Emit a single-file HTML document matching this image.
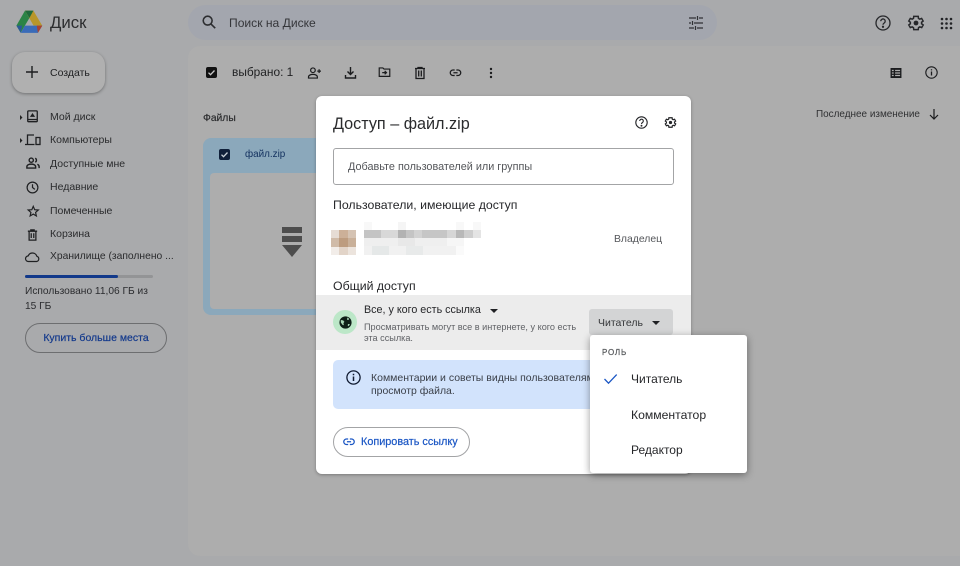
<!DOCTYPE html>
<html lang="ru"><head><meta charset="utf-8"><title>Диск</title>
<style>
html,body{margin:0;padding:0}
body{width:960px;height:566px;overflow:hidden;position:relative;background:#a9aaac;font-family:"Liberation Sans",sans-serif;color:#202124}
.t{position:absolute;white-space:nowrap;line-height:16px;height:16px}
.a{position:absolute}
svg.a{overflow:visible}
.n{font-size:10.5px;color:#2a2b2d;left:50px}
.p{position:absolute;width:8.4px;height:8.4px}
</style></head><body>
<!-- main panel -->
<div class="a" style="left:188px;top:46px;width:772px;height:510px;background:#adadad;border-radius:12px 0 0 12px"></div>
<!-- search -->
<div class="a" style="left:188px;top:5px;width:529px;height:35px;background:#a3a6ae;border-radius:18px"></div>
<!-- logo -->
<svg class="a" style="left:16px;top:10px" width="27" height="24" viewBox="0 0 27 24">
<path d="M9 .6 .4 15.6l4.3 7.2L13.4 8z" fill="#2b8446"/>
<path d="M9 .6h8.4l8.8 15H17.6z" fill="#b8962a"/>
<path d="M9 .6h8.4L13.4 8z" fill="#1f6a3c"/>
<path d="M26.3 15.6H8.9l-4.2 7.3h17.2z" fill="#3a6bb8"/>
<path d="M26.3 15.6h-5.600l1.200 7.300z" fill="#a84232"/>
<path d="M4.700 22.900.4 15.600h5.800z" fill="#2b5a96"/>
</svg>
<div class="t" style="left:50px;top:15px;font-size:16.800px;color:#2c2d2f">Диск</div>
<!-- search icon -->
<svg class="a" style="left:201px;top:14px" width="16" height="16" viewBox="0 0 18 18" fill="none" stroke="#2c2d30" stroke-width="1.800"><circle cx="7.500" cy="7.500" r="5"/><path d="M11 11l5 5"/></svg>
<div class="t" style="left:229px;top:15px;font-size:12.100px;color:#35363a">Поиск на Диске</div>
<svg class="a" style="left:688px;top:15px" width="16" height="16" viewBox="0 0 16 16" fill="none" stroke="#303134" stroke-width="1.200"><path d="M1 3h7M11 3h4M1 8h2M6 8h9M1 13h5M9 13h6M9.500 1v4M4.500 6v4M7.500 11v4"/></svg>
<!-- top right icons -->
<svg class="a" style="left:875px;top:15px" width="16" height="16" viewBox="0 0 16 16" fill="none" stroke="#26272a" stroke-width="1.300"><circle cx="8" cy="8" r="7"/><path d="M5.800 6.200a2.200 2.200 0 1 1 3.400 1.800c-.8.500-1.200 1-1.200 1.800"/><circle cx="8" cy="11.800" r=".5" fill="#26272a"/></svg>
<svg class="a" style="left:906.500px;top:14px" width="18" height="18" viewBox="0 0 24 24" fill="none" stroke="#26272a" stroke-width="2"><path d="M19.400 13a7.500 7.500 0 0 0 0-2l2.100-1.600-2-3.500-2.500 1a7.300 7.300 0 0 0-1.700-1L15 3.200H9l-.4 2.700a7.300 7.300 0 0 0-1.700 1l-2.500-1-2 3.500L4.500 11a7.500 7.500 0 0 0 0 2l-2.100 1.600 2 3.500 2.500-1a7.300 7.300 0 0 0 1.700 1l.4 2.700h6l.4-2.700a7.300 7.300 0 0 0 1.700-1l2.500 1 2-3.500z"/><circle cx="12" cy="12" r="3.200" fill="#26272a" stroke="none"/></svg>
<svg class="a" style="left:940px;top:17px" width="13" height="13" viewBox="0 0 13 13" fill="#222326"><circle cx="2" cy="2" r="1.300"/><circle cx="6.500" cy="2" r="1.300"/><circle cx="11" cy="2" r="1.300"/><circle cx="2" cy="6.500" r="1.300"/><circle cx="6.500" cy="6.500" r="1.300"/><circle cx="11" cy="6.500" r="1.300"/><circle cx="2" cy="11" r="1.300"/><circle cx="6.500" cy="11" r="1.300"/><circle cx="11" cy="11" r="1.300"/></svg>
<!-- create -->
<div class="a" style="left:12px;top:52px;width:93px;height:41px;background:#b0b0b0;border-radius:13px;box-shadow:0 1px 3px rgba(0,0,0,.35)"></div>
<svg class="a" style="left:25px;top:65px" width="14" height="14" viewBox="0 0 14 14" stroke="#1d1e20" stroke-width="1.400"><path d="M7 1v12M1 7h12"/></svg>
<div class="t" style="left:50px;top:64.500px;font-size:10.500px;color:#1f2022">Создать</div>
<!-- nav -->
<svg class="a" style="left:19px;top:114px" width="4" height="32" fill="#222"><path d="M1 1l2.500 2.500L1 6zM1 24l2.500 2.500L1 29z"/></svg>
<svg class="a" style="left:25.500px;top:110px" width="13" height="13" viewBox="0 0 15 15" fill="none" stroke="#1f2022" stroke-width="1.500"><rect x="2" y="1" width="11" height="12.500" rx="1"/><path d="M2 11h11"/><path d="M7.500 3.500 10.500 8h-6z" fill="#1f2022" stroke="none"/></svg>
<svg class="a" style="left:25px;top:133px" width="16" height="14" viewBox="0 0 16 14" fill="none" stroke="#1f2022" stroke-width="1.300"><path d="M9 2H2.500v9M0 11.500h9.500"/><rect x="11" y="4.500" width="4" height="7"/></svg>
<svg class="a" style="left:25.500px;top:157px" width="14" height="12.500" viewBox="0 0 16 14" fill="none" stroke="#1f2022" stroke-width="1.600"><circle cx="6" cy="3.500" r="2.400"/><path d="M1 12.500v-1.500c0-2 2.500-3 5-3s5 1 5 3v1.500z"/><path d="M10.500 1.300a2.400 2.400 0 0 1 0 4.400M13 8.200c1.200.6 2 1.500 2 2.800v1.500"/></svg>
<svg class="a" style="left:26px;top:181px" width="13" height="13" viewBox="0 0 14 14" fill="none" stroke="#1f2022" stroke-width="1.300"><circle cx="7" cy="7" r="5.800"/><path d="M7 3.500V7l2.500 2"/></svg>
<svg class="a" style="left:26.500px;top:205px" width="12.500" height="12.500" viewBox="0 0 14 14" fill="none" stroke="#1f2022" stroke-width="1.300"><path d="M7 1.500l1.600 3.800 4.100.3-3.100 2.700.9 4-3.500-2.100-3.500 2.100.9-4L1.300 5.600l4.100-.3z"/></svg>
<svg class="a" style="left:27px;top:228.500px" width="11" height="12" viewBox="0 0 13 14" fill="none" stroke="#1f2022" stroke-width="1.500"><path d="M1 2.500h11M2.500 2.500v10.500h8V2.500M4.500 2.500V1h4v1.500M5 5v5.500M8 5v5.500"/></svg>
<svg class="a" style="left:25px;top:251px" width="15" height="12" viewBox="0 0 15 12" fill="none" stroke="#1f2022" stroke-width="1.200"><path d="M3.500 10.500a2.800 2.800 0 0 1-.3-5.600A4.600 4.600 0 0 1 7.500 2a4.600 4.600 0 0 1 4.400 3.300 2.700 2.700 0 0 1-.2 5.200z"/></svg>
<div class="t n" style="top:108.500px">Мой диск</div>
<div class="t n" style="top:132px">Компьютеры</div>
<div class="t n" style="top:155.500px">Доступные мне</div>
<div class="t n" style="top:179px">Недавние</div>
<div class="t n" style="top:202.500px">Помеченные</div>
<div class="t n" style="top:225.500px">Корзина</div>
<div class="t n" style="top:249px;font-size:10.300px">Хранилище (заполнено ...</div>
<div class="a" style="left:25px;top:275px;width:128px;height:3px;background:#939496;border-radius:2px"></div>
<div class="a" style="left:25px;top:275px;width:93px;height:3px;background:#12398a;border-radius:2px"></div>
<div class="t" style="left:25px;top:283.500px;font-size:10.200px;color:#2b2c2f">Использовано 11,06 ГБ из</div>
<div class="t" style="left:25px;top:298.500px;font-size:10.200px;color:#2b2c2f">15 ГБ</div>
<div class="a" style="left:25px;top:323px;width:140px;height:28px;border:1px solid #6d6e70;border-radius:15px"></div>
<div class="t" style="left:25px;top:330px;width:142px;text-align:center;font-size:10.500px;color:#143a8c;-webkit-text-stroke:.2px #143a8c">Купить больше места</div>
<!-- toolbar -->
<div class="a" style="left:206px;top:67px;width:11px;height:11px;background:#111;border-radius:2px"></div>
<svg class="a" style="left:206px;top:67px" width="11" height="11" fill="none" stroke="#c8c8c8" stroke-width="1.300"><path d="M2.500 5.700l2 2 4-4.200"/></svg>
<div class="t" style="left:232px;top:64px;font-size:11.900px;color:#1f2022">выбрано: 1</div>
<svg class="a" style="left:307px;top:67px" width="15" height="12" viewBox="0 0 15 13" fill="none" stroke="#1b1c1e" stroke-width="1.300"><circle cx="5.800" cy="3.500" r="2.500"/><path d="M1 12v-1.200c0-1.800 2.300-2.800 4.800-2.800s4.800 1 4.800 2.800V12zM10.500 4.500h4M12.500 2.500v4"/></svg>
<svg class="a" style="left:345px;top:67px" width="11" height="12" viewBox="0 0 11 12" fill="none" stroke="#1b1c1e" stroke-width="1.400"><path d="M5.500 0v7M2.500 4.500l3 3 3-3M.5 8v3h10V8"/></svg>
<svg class="a" style="left:378px;top:67px" width="13" height="10" viewBox="0 0 13 11" fill="none" stroke="#1b1c1e" stroke-width="1.300"><path d="M.7 1h4l1.300 1.300h6.300v8H.7zM4 6.200h4.500M6.700 4.300l2 1.900-2 1.900"/></svg>
<svg class="a" style="left:415px;top:67px" width="10" height="12" viewBox="0 0 10 12" fill="none" stroke="#1b1c1e" stroke-width="1.300"><path d="M0 1.500h10M1 1.500v10h8v-10M3 1.500V.5h4v1M3.700 3.500v6M6.300 3.500v6"/></svg>
<svg class="a" style="left:449px;top:69px" width="13" height="7.500" viewBox="0 0 13 9" fill="none" stroke="#1b1c1e" stroke-width="1.500"><path d="M5.500 1.200H3.500a3.300 3.300 0 0 0 0 6.600h2M7.500 1.200h2a3.300 3.300 0 0 1 0 6.600h-2M4 4.500h5"/></svg>
<svg class="a" style="left:489px;top:67px" width="4" height="12" fill="#1b1c1e"><circle cx="2" cy="2" r="1.200"/><circle cx="2" cy="6" r="1.200"/><circle cx="2" cy="10" r="1.200"/></svg>
<svg class="a" style="left:890px;top:67.500px" width="12" height="10" viewBox="0 0 12 11"><path fill-rule="evenodd" fill="#1b1c1e" d="M0 0h12v11H0zM1.500 2v1.500h2V2zm3.500 0v1.500h5.500V2zM1.500 4.800v1.400h2V4.800zm3.500 0v1.400h5.500V4.800zM1.500 7.500V9h2V7.500zm3.500 0V9h5.500V7.500z"/></svg>
<svg class="a" style="left:925px;top:66px" width="13" height="13" viewBox="0 0 13 13" fill="none" stroke="#1b1c1e" stroke-width="1.100"><circle cx="6.500" cy="6.500" r="5.700"/><path d="M6.500 5.500v4M6.500 3.200v1.200" stroke-width="1.300"/></svg>
<div class="t" style="left:203px;top:110.500px;font-size:10.300px;color:#28292b;-webkit-text-stroke:.15px #28292b">Файлы</div>
<div class="t" style="left:816px;top:107px;font-size:9.950px;color:#2f3032">Последнее изменение</div>
<svg class="a" style="left:929px;top:109px" width="10" height="11" fill="none" stroke="#1b1c1e" stroke-width="1.200"><path d="M5 0v10M1 6l4 4 4-4"/></svg>
<!-- file card -->
<div class="a" style="left:203px;top:138px;width:120px;height:177px;background:#8ba8bb;border-radius:8px 0 0 8px"></div>
<div class="a" style="left:210px;top:173px;width:110px;height:136px;background:#adadad;border-radius:4px"></div>
<div class="a" style="left:219px;top:149px;width:11px;height:11px;background:#10203a;border-radius:2px"></div>
<svg class="a" style="left:219px;top:149px" width="11" height="11" fill="none" stroke="#c8d0d8" stroke-width="1.300"><path d="M2.500 5.700l2 2 4-4.200"/></svg>
<div class="t" style="left:245px;top:147px;font-size:9.900px;color:#12305e">файл.zip</div>
<div class="a" style="left:282px;top:227px;width:20px;height:6px;background:#4d4d4d"></div>
<div class="a" style="left:282px;top:236px;width:20px;height:6px;background:#4d4d4d"></div>
<svg class="a" style="left:282px;top:245px" width="20" height="12"><path d="M0 0h20L10 12z" fill="#4d4d4d"/></svg>
<!-- dialog -->
<div class="a" style="left:316px;top:96px;width:375px;height:378px;background:#fff;border-radius:6px;box-shadow:0 1px 3px rgba(0,0,0,.3)"></div>
<div class="t" style="left:333px;top:115px;font-size:16.200px;line-height:18px;height:18px;color:#2a2b2d">Доступ – файл.zip</div>
<svg class="a" style="left:635px;top:115.500px" width="13" height="13" viewBox="0 0 13 13" fill="none" stroke="#222326" stroke-width="1.100"><circle cx="6.500" cy="6.500" r="5.700"/><path d="M4.700 5a1.800 1.800 0 1 1 2.800 1.500c-.7.400-1 .8-1 1.500"/><circle cx="6.500" cy="9.700" r=".4" fill="#222326"/></svg>
<svg class="a" style="left:664px;top:115.500px" width="13" height="13" viewBox="0 0 24 24" fill="none" stroke="#222326" stroke-width="2.200"><path d="M19.400 13a7.500 7.500 0 0 0 0-2l2.100-1.600-2-3.500-2.500 1a7.300 7.300 0 0 0-1.700-1L15 3.200H9l-.4 2.700a7.300 7.300 0 0 0-1.700 1l-2.500-1-2 3.500L4.500 11a7.500 7.500 0 0 0 0 2l-2.100 1.600 2 3.500 2.500-1a7.300 7.300 0 0 0 1.700 1l.4 2.700h6l.4-2.700a7.300 7.300 0 0 0 1.700-1l2.500 1 2-3.500z"/><circle cx="12" cy="12" r="3" fill="#222326" stroke="none"/></svg>
<div class="a" style="left:333px;top:148px;width:339px;height:35px;border:1px solid #a3a4a6;border-radius:3px"></div>
<div class="t" style="left:348px;top:158.500px;font-size:10.850px;color:#54565a">Добавьте пользователей или группы</div>
<div class="t" style="left:333px;top:197px;font-size:12.300px;color:#26272a">Пользователи, имеющие доступ</div>
<!-- avatar pixels -->
<div class="p" style="left:331px;top:230px;background:#e6dcd4"></div><div class="p" style="left:339.400px;top:230px;background:#ccb098"></div><div class="p" style="left:347.800px;top:230px;background:#d5c3b3"></div>
<div class="p" style="left:331px;top:238.400px;background:#d0bba8"></div><div class="p" style="left:339.400px;top:238.400px;background:#bd9c7f"></div><div class="p" style="left:347.800px;top:238.400px;background:#c9b099"></div>
<div class="p" style="left:331px;top:246.800px;background:#f2ede9"></div><div class="p" style="left:339.400px;top:246.800px;background:#e2d4c8"></div><div class="p" style="left:347.800px;top:246.800px;background:#ece4dd"></div>
<svg class="a" style="left:364px;top:222px" width="120" height="34" shape-rendering="crispEdges">
<rect x="0" y="0" width="8" height="8" fill="#f8f8f8"/><rect x="34" y="0" width="8" height="8" fill="#f5f5f5"/><rect x="92" y="0" width="8" height="8" fill="#f8f8f8"/><rect x="109" y="0" width="8" height="8" fill="#f8f8f8"/>
<rect x="0" y="8" width="17" height="8" fill="#c4c4c4"/><rect x="17" y="8" width="17" height="8" fill="#d8d8d8"/><rect x="34" y="8" width="8" height="8" fill="#b2b2b2"/><rect x="42" y="8" width="8" height="8" fill="#c4c4c4"/><rect x="50" y="8" width="8" height="8" fill="#d2d2d2"/><rect x="58" y="8" width="25" height="8" fill="#c6c6c6"/><rect x="83" y="8" width="9" height="8" fill="#d6d6d6"/><rect x="92" y="8" width="8" height="8" fill="#b8b8b8"/><rect x="100" y="8" width="9" height="8" fill="#cecece"/><rect x="109" y="8" width="8" height="8" fill="#e4e4e4"/>
<rect x="0" y="16" width="83" height="8" fill="#efefef"/><rect x="34" y="16" width="17" height="8" fill="#e8e8e8"/><rect x="83" y="16" width="17" height="8" fill="#f6f6f6"/>
<rect x="0" y="24" width="92" height="9" fill="#f1f1f1"/><rect x="8" y="24" width="17" height="9" fill="#e5e8e8"/><rect x="42" y="24" width="17" height="9" fill="#e8eaea"/><rect x="92" y="24" width="8" height="9" fill="#fafafa"/>
</svg>
<div class="t" style="left:614px;top:232px;font-size:10.400px;color:#54565a">Владелец</div>
<div class="t" style="left:333px;top:278px;font-size:12.300px;color:#26272a">Общий доступ</div>
<!-- access row -->
<div class="a" style="left:316px;top:295px;width:375px;height:55px;background:#ececec"></div>
<div class="a" style="left:333px;top:310px;width:24px;height:24px;background:#bce7c8;border-radius:50%"></div>
<svg class="a" style="left:338.500px;top:315.500px" width="13" height="13" viewBox="0 0 13 13"><circle cx="6.500" cy="6.500" r="6.100" fill="#0f1f18"/><path d="M1.800 4l2.400.4 1.200 1.500-1 1.200.5 2.200-1.500-.6-1.600-2.300zM8.300 1.500l1.900 1.200-.6 1.200-1.500 0zM9 8h1.900l-1.100 2.200-1.100-.7z" fill="#a9d5b6"/></svg>
<div class="t" style="left:364px;top:302px;font-size:10.750px;color:#26272a">Все, у кого есть ссылка</div>
<svg class="a" style="left:490px;top:309px" width="8" height="4"><path d="M0 0h8L4 4z" fill="#202124"/></svg>
<div class="t" style="left:364px;top:318.500px;font-size:9.150px;color:#606266">Просматривать могут все в интернете, у кого есть</div>
<div class="t" style="left:364px;top:330px;font-size:9.150px;color:#606266">эта ссылка.</div>
<div class="a" style="left:589px;top:309px;width:84px;height:26px;background:#d3d4d5;border-radius:3px"></div>
<div class="t" style="left:598px;top:314.500px;font-size:10.500px;color:#36373a">Читатель</div>
<svg class="a" style="left:651.500px;top:321px" width="8" height="4"><path d="M0 0h8L4 4z" fill="#202124"/></svg>
<!-- info -->
<div class="a" style="left:333px;top:360px;width:300px;height:49px;background:#d2e3fc;border-radius:5px"></div>
<svg class="a" style="left:346px;top:370px" width="15" height="15" viewBox="0 0 15 15" fill="none" stroke="#0f1a30" stroke-width="1.300"><circle cx="7.500" cy="7.500" r="6.600"/><path d="M7.500 6.500v4.500M7.500 3.800v1.400" stroke-width="1.500"/></svg>
<div class="t" style="left:371px;top:369.500px;width:219px;overflow:hidden;font-size:10.500px;color:#3a3f48">Комментарии и советы видны пользователям</div>
<div class="t" style="left:371px;top:384px;font-size:10.450px;color:#3a3f48">просмотр файла.</div>
<!-- copy link -->
<div class="a" style="left:333px;top:427px;width:135px;height:28px;border:1px solid #a3a4a6;border-radius:15px"></div>
<svg class="a" style="left:343px;top:438px" width="12" height="7.500" viewBox="0 0 12 9" fill="none" stroke="#1a56c4" stroke-width="1.500"><path d="M5 1.200H3a3.300 3.300 0 0 0 0 6.600h2M7 1.200h2a3.300 3.300 0 0 1 0 6.600H7M3.500 4.500h5"/></svg>
<div class="t" style="left:361px;top:433.500px;font-size:10.850px;color:#1a56c4;-webkit-text-stroke:.2px #1a56c4">Копировать ссылку</div>
<!-- menu -->
<div class="a" style="left:590px;top:335px;width:157px;height:138px;background:#fff;border-radius:3px;box-shadow:0 2px 8px rgba(0,0,0,.4)"></div>
<div class="t" style="left:602px;top:345px;font-size:8px;letter-spacing:.8px;color:#55575a;-webkit-text-stroke:.2px #55575a">РОЛЬ</div>
<svg class="a" style="left:604px;top:374px" width="13" height="10" fill="none" stroke="#1a56c4" stroke-width="1.300"><path d="M.5 5l4 4.200L12.700.6"/></svg>
<div class="t" style="left:631px;top:371px;font-size:12px;color:#26272a">Читатель</div>
<div class="t" style="left:631px;top:406.500px;font-size:12.200px;color:#26272a">Комментатор</div>
<div class="t" style="left:631px;top:442px;font-size:12px;color:#26272a">Редактор</div>
</body></html>
